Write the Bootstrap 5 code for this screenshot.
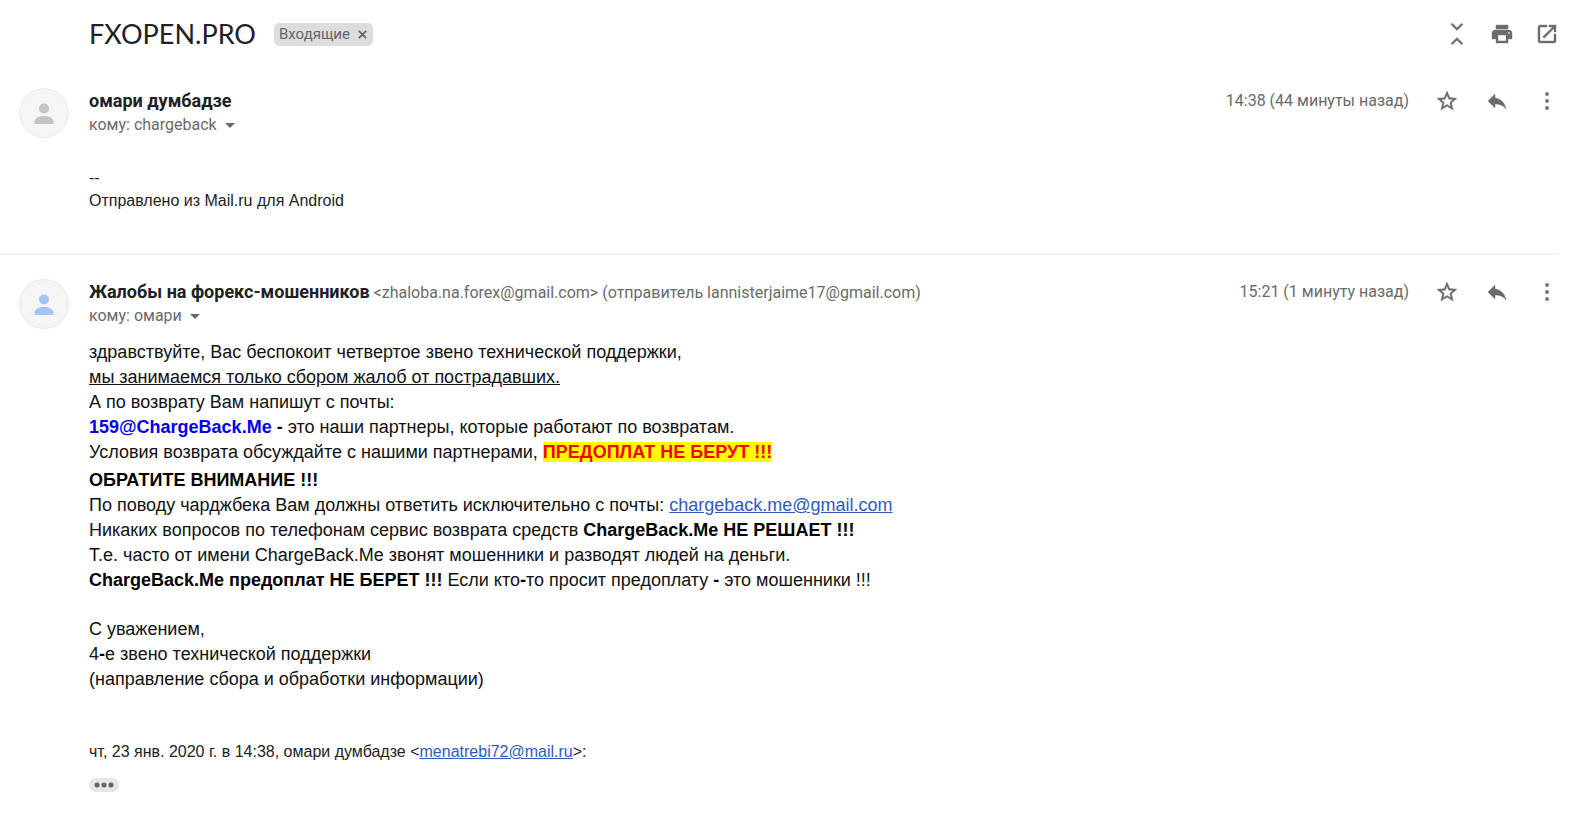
<!DOCTYPE html>
<html lang="ru">
<head>
<meta charset="utf-8">
<meta name="viewport" content="width=device-width, initial-scale=1">
<title>FXOPEN.PRO</title>
<link rel="stylesheet" href="https://cdn.jsdelivr.net/npm/bootstrap@5.3.0/dist/css/bootstrap.min.css">
<style>
  body { font-family: Roboto, "Liberation Sans", sans-serif; font-size: 16px; line-height: 20px; color: #202124; background: #fff; }
  .thread { margin-right: 18px; }
  .thread-head { padding: 14px 0 0 89px; height: 73px; }
  .subject { font-family: Lato, sans-serif; font-size: 27px; line-height: 40px; color: #202124; }
  .folder-tag { background: #ddd; color: #666; border-radius: 5px; height: 23px; padding: 0 5px; margin-left: 18px; gap: 7px; font-size: 15px; line-height: 22px; }
  .tool { width: 24px; height: 24px; padding: 0; border: 0; background: none; color: #6b6b6b; display: flex; align-items: center; justify-content: center; }
  .tool svg { display: block; width: 24px; height: 24px; fill: currentColor; stroke: currentColor; stroke-width: 0.4; }
  .folder-tag .tag-close { border: 0; padding: 0; background: none; color: #666; display: flex; }
  .head-tools { gap: 21px; }
  .message { padding: 15px 0 0 19px; }
  .message + .message { border-top: 2px solid #f1f1f1; padding-top: 24px; }
  .avatar { width: 50px; height: 50px; margin-right: 20px; }
  .avatar-grey { color: #c4c4c4; }
  .avatar-blue { color: #a6c3f7; }
  .mail-head { min-height: 26px; }
  .sender { font-size: 18px; line-height: 24px; font-weight: 700; }
  .muted-text { color: #6a6a6a; }
  .to-line { line-height: 22px; padding: 0; border: 0; background: none; color: #6a6a6a; gap: 8px; }
  .when { margin-right: 26px; }
  .msg-tools { gap: 26px; }
  .mail-text { font-family: "Liberation Sans", Arial, sans-serif; font-size: 16px; line-height: 23px; color: #222; }
  .mail-short { padding: 30px 0 41px; }
  .mail-big { font-size: 18px; line-height: 25px; color: #111; padding-top: 13px; }
  .mail-text b { color: #000; }
  .mail-text a { color: #2f5bc0; }
  .mail-text b.partner { color: #0000e6; }
  .mail-big .warn { margin-bottom: 3px; }
  .warn b { background: #ff0; color: #f00; }
  .more { width: 30px; height: 14px; border: 0; border-radius: 7px; background: #e6e6e6; padding: 0; margin-top: 15px; display: flex; align-items: center; justify-content: center; }
</style>
</head>
<body>
<svg class="d-none" aria-hidden="true">
  <symbol id="i-star" viewBox="0 0 24 24"><path d="M22 9.24l-7.19-.62L12 2 9.19 8.63 2 9.24l5.46 4.73L5.82 21 12 17.27 18.18 21l-1.63-7.03L22 9.24zM12 15.4l-3.76 2.27 1-4.28-3.32-2.88 4.38-.38L12 6.1l1.71 4.04 4.38.38-3.32 2.88 1 4.28L12 15.4z"/></symbol>
  <symbol id="i-reply" viewBox="0 0 24 24"><path d="M10 9V5l-7 7 7 7v-4.100c5 0 8.500 1.600 11 5.100-1-5-4-10-11-11z"/></symbol>
  <symbol id="i-dots" viewBox="0 0 24 24"><circle cx="12" cy="5" r="1.700"/><circle cx="12" cy="12" r="1.700"/><circle cx="12" cy="19" r="1.700"/></symbol>
  <symbol id="i-person" viewBox="0 0 50 50"><circle cx="25" cy="25" r="24.500" fill="#f5f5f5" stroke="#e9e9e9"/><circle cx="25" cy="20.500" r="5" fill="currentColor"/><path d="M15.500 36v-2.500c0-3.500 5-5.500 9.500-5.500s9.500 2 9.500 5.500V36z" fill="currentColor"/></symbol>
</svg>

<main class="thread">
  <header class="thread-head d-flex align-items-start">
    <div class="d-flex align-items-center flex-grow-1">
      <h1 class="subject fw-normal mb-0">FXOPEN.PRO</h1>
      <span class="folder-tag d-inline-flex align-items-center">Входящие
        <button class="tag-close" type="button" aria-label="Удалить ярлык"><svg width="11" height="11" viewBox="0 0 12 12" fill="none" stroke="currentColor" stroke-width="2"><path d="M2 2l8 8M10 2l-8 8"/></svg></button>
      </span>
    </div>
    <div class="head-tools d-flex mt-2">
      <button class="tool" type="button" aria-label="Свернуть все"><svg viewBox="0 0 24 24"><path d="M7.400 1.200L6 2.600l6 6 6-6-1.400-1.400L12 5.800zM7.400 22.800L6 21.400l6-6 6 6-1.400 1.400L12 18.200z"/></svg></button>
      <button class="tool" type="button" aria-label="Печать"><svg viewBox="0 0 24 24"><path d="M19 8H5c-1.660 0-3 1.340-3 3v6h4v4h12v-4h4v-6c0-1.660-1.340-3-3-3zm-3 11H8v-6h8v6zm3-7c-.550 0-1-.450-1-1s.450-1 1-1 1 .450 1 1-.450 1-1 1zM18 3H6v4h12V3z"/></svg></button>
      <button class="tool" type="button" aria-label="В новом окне"><svg viewBox="0 0 24 24"><path d="M19 19H5V5h7V3H5c-1.110 0-2 .900-2 2v14c0 1.100.890 2 2 2h14c1.100 0 2-.900 2-2v-7h-2v7zM14 3v2h3.590l-9.830 9.830 1.410 1.410L19 6.410V10h2V3h-7z"/></svg></button>
    </div>
  </header>

  <article class="message d-flex align-items-start">
    <svg class="avatar avatar-grey flex-shrink-0"><use href="#i-person"/></svg>
    <div class="flex-grow-1">
      <div class="mail-head d-flex align-items-center">
        <div class="flex-grow-1"><span class="sender">омари думбадзе</span></div>
        <time class="when muted-text">14:38 (44 минуты назад)</time>
        <div class="msg-tools d-flex">
          <button class="tool" type="button" aria-label="Пометить"><svg><use href="#i-star"/></svg></button>
          <button class="tool" type="button" aria-label="Ответить"><svg><use href="#i-reply"/></svg></button>
          <button class="tool" type="button" aria-label="Ещё"><svg><use href="#i-dots"/></svg></button>
        </div>
      </div>
      <button class="to-line d-flex align-items-center" type="button">кому: chargeback <svg width="10" height="5" viewBox="0 0 10 5"><path d="M0 0h10L5 5z" fill="currentColor"/></svg></button>
      <div class="mail-text mail-short">
        --<br>Отправлено из Mail.ru для Android
      </div>
    </div>
  </article>

  <article class="message d-flex align-items-start">
    <svg class="avatar avatar-blue flex-shrink-0"><use href="#i-person"/></svg>
    <div class="flex-grow-1">
      <div class="mail-head d-flex align-items-center">
        <div class="flex-grow-1"><span class="sender">Жалобы на форекс-мошенников</span> <span class="muted-text">&lt;zhaloba.na.forex@gmail.com&gt; (отправитель lannisterjaime17@gmail.com)</span></div>
        <time class="when muted-text">15:21 (1 минуту назад)</time>
        <div class="msg-tools d-flex">
          <button class="tool" type="button" aria-label="Пометить"><svg><use href="#i-star"/></svg></button>
          <button class="tool" type="button" aria-label="Ответить"><svg><use href="#i-reply"/></svg></button>
          <button class="tool" type="button" aria-label="Ещё"><svg><use href="#i-dots"/></svg></button>
        </div>
      </div>
      <button class="to-line d-flex align-items-center" type="button">кому: омари <svg width="10" height="5" viewBox="0 0 10 5"><path d="M0 0h10L5 5z" fill="currentColor"/></svg></button>
      <div class="mail-text mail-big">
        <div>здравствуйте, Вас беспокоит четвертое звено технической поддержки,</div>
        <div><u>мы занимаемся только сбором жалоб от пострадавших.</u></div>
        <div>А по возврату Вам напишут с почты:</div>
        <div><b class="partner">159@ChargeBack.Me</b><b> -</b> это наши партнеры, которые работают по возвратам.</div>
        <div class="warn">Условия возврата обсуждайте с нашими партнерами, <b>ПРЕДОПЛАТ НЕ БЕРУТ !!!</b></div>
        <div><b>ОБРАТИТЕ ВНИМАНИЕ !!!</b></div>
        <div>По поводу чарджбека Вам должны ответить исключительно с почты: <a href="mailto:chargeback.me@gmail.com">chargeback.me@gmail.com</a></div>
        <div>Никаких вопросов по телефонам сервис возврата средств <b>ChargeBack.Me НЕ РЕШАЕТ !!!</b></div>
        <div>Т.е. часто от имени ChargeBack.Me звонят мошенники и разводят людей на деньги.</div>
        <div class="mb-4"><b>ChargeBack.Me предоплат НЕ БЕРЕТ !!!</b> Если кто<b>-</b>то просит предоплату <b>-</b> это мошенники !!!</div>
        <div>С уважением,</div>
        <div>4<b>-</b>е звено технической поддержки</div>
        <div>(направление сбора и обработки информации)</div>
      </div>
      <div class="mail-text mt-5">чт, 23 янв. 2020 г. в 14:38, омари думбадзе &lt;<a href="mailto:menatrebi72@mail.ru">menatrebi72@mail.ru</a>&gt;:</div>
      <button class="more" type="button" aria-label="Показать скрытый текст"><svg width="20" height="6" viewBox="0 0 20 6" fill="#666"><circle cx="3" cy="3" r="2.500"/><circle cx="10" cy="3" r="2.500"/><circle cx="17" cy="3" r="2.500"/></svg></button>
    </div>
  </article>
</main>
<script src="https://cdn.jsdelivr.net/npm/bootstrap@5.3.0/dist/js/bootstrap.bundle.min.js"></script>
</body>
</html>
